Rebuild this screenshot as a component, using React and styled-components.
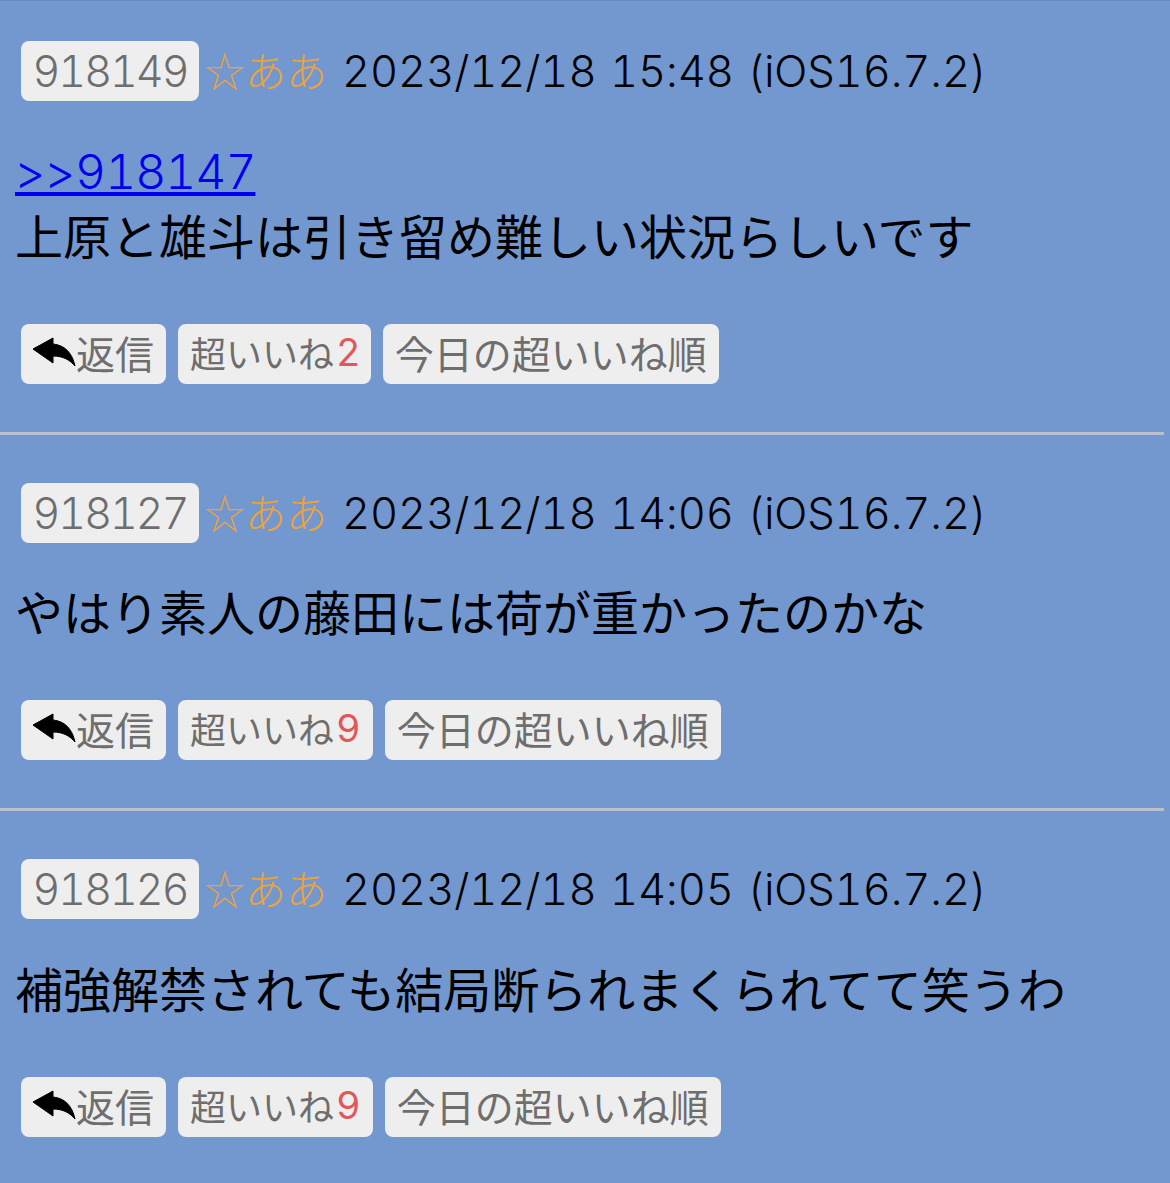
import React from 'react';
import styled, { createGlobalStyle } from 'styled-components';

const posts = [
  { no: '918149', date: '2023/12/18 15:48 (iOS16.7.2)', anchor: '>>918147', body: '上原と雄斗は引き留め難しい状況らしいです', likes: 2 },
  { no: '918127', date: '2023/12/18 14:06 (iOS16.7.2)', body: 'やはり素人の藤田には荷が重かったのかな', likes: 9 },
  { no: '918126', date: '2023/12/18 14:05 (iOS16.7.2)', body: '補強解禁されても結局断られまくられてて笑うわ', likes: 9 },
];

function App() {
  return (
    <Page>
      <GlobalStyle />
      {posts.map((p) => (
        <Post key={p.no}>
          <Head>
            <Num>{p.no}</Num>
            <Name>☆ああ</Name>
            <Stamp>{p.date}</Stamp>
          </Head>
          <Body>
            {p.anchor && <Anchor href="#">{p.anchor}</Anchor>}
            <div>{p.body}</div>
          </Body>
          <Actions>
            <Btn>
              <svg width="43" height="30" viewBox="0 0 43 30">
                <path d="M0 12 L20 1 L20 7 C31 8 39 15 42 29 C37 23 30 19 20 19 L20 26 Z" fill="#000" stroke="#000" strokeWidth="1" strokeLinejoin="round" />
              </svg>
              返信
            </Btn>
            <Btn $small>超いいね<Count $narrow={p.likes === 2}>{p.likes}</Count></Btn>
            <Btn>今日の超いいね順</Btn>
          </Actions>
        </Post>
      ))}
    </Page>
  );
}

const GlobalStyle = createGlobalStyle`
  body {
    margin: 0;
    background: #7397cf;
    font-family: Inter, "Noto Sans CJK JP", sans-serif;
    font-weight: 400;
    font-variant-numeric: tabular-nums;
  }
`;
const Page = styled.div`
  width: 1170px;
  height: 1183px;
  overflow: hidden;
  background: #7397cf;
  box-shadow: inset 0 1px 0 #6889bf;
`;
const Post = styled.div`
  width: 1164px;
  padding: 48px 0 48px;
  border-bottom: 3px solid #b9c1cf;
  box-sizing: border-box;
  &:first-child { padding-top: 41px; }
  &:last-child { border-bottom: 0; }
`;
const Head = styled.div`
  display: flex;
  align-items: center;
  padding-left: 21px;
  height: 60px;
`;
const Num = styled.span`
  display: flex;
  align-items: center;
  justify-content: center;
  width: 178px;
  height: 60px;
  background: #eeeeee;
  border-radius: 8px;
  color: #6e6e6e;
  font-size: 43px;
  font-weight: 300;
  letter-spacing: -2px;
`;
const Name = styled.span`
  color: #e8a33d;
  font-family: "Noto Sans CJK JP", sans-serif;
  font-size: 41px;
  font-weight: 300;
  margin-left: 5px;
  padding-bottom: 4px;
  white-space: nowrap;
`;
const Stamp = styled.span`
  color: #000;
  font-size: 43.5px;
  font-weight: 300;
  letter-spacing: -0.1px;
  word-spacing: 2px;
  margin-left: 15px;
  white-space: nowrap;
`;
const Body = styled.div`
  padding: 38px 0 0 15px;
  font-size: 48px;
  line-height: 66px;
  color: #000;
  margin-bottom: 53px;
  ${Post}:last-child & { padding-top: 39px; }
`;
const Anchor = styled.a`
  color: #0000ee;
  display: block;
  width: fit-content;
  font-weight: 300;
  letter-spacing: -1px;
  text-decoration: underline;
`;
const Actions = styled.div`
  display: flex;
  gap: 12px;
  padding-left: 21px;
`;
const Btn = styled.span`
  display: flex;
  align-items: center;
  height: 60px;
  padding: 0 12px 4px;
  box-sizing: border-box;
  background: #eeeeee;
  border-radius: 8px;
  color: #6e6e6e;
  font-size: ${(p) => (p.$small ? '36px' : '39px')};
  white-space: nowrap;
`;
const Count = styled.span`
  color: #e0585a;
  font-size: 38px;
  margin-left: 2px;
  margin-right: ${(p) => (p.$narrow ? '-2px' : '0')};
`;

export default App;
